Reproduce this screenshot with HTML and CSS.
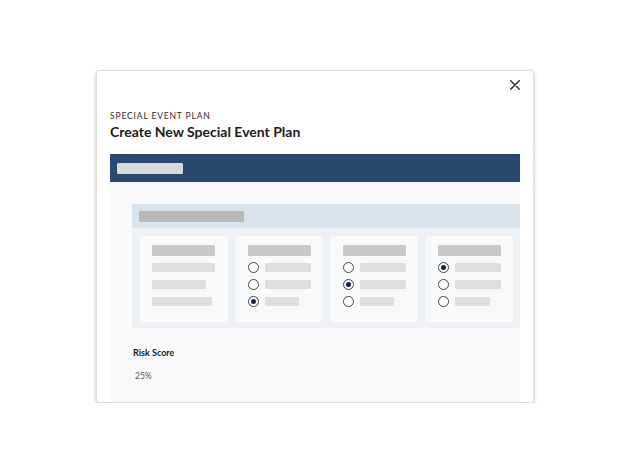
FILE: index.html
```html
<!DOCTYPE html>
<html lang="en">
<head>
<meta charset="utf-8">
<title>Create New Special Event Plan</title>
<link rel="stylesheet" href="styles.css">
</head>
<body>
<div class="modal">
  <div class="modal-top">
    <button class="close" aria-label="Close">
      <svg width="10" height="10" viewBox="0 0 10 10"><path d="M0.7 0.7 L9.3 9.3 M9.3 0.7 L0.7 9.3" stroke="#2b2b2b" stroke-width="1.4" fill="none" stroke-linecap="round"/></svg>
    </button>
  </div>
  <div class="eyebrow">SPECIAL EVENT PLAN</div>
  <h1 class="title">Create New Special Event Plan</h1>
  <div class="topbar"><span class="ph ph-bar"></span></div>
  <div class="content">
    <div class="panel">
      <div class="panel-head"><span class="ph ph-panel"></span></div>
      <div class="panel-body">
        <div class="card card-plain">
          <span class="ph ph-head"></span>
          <div class="row"><span class="ph ph-line" style="width:63px"></span></div>
          <div class="row"><span class="ph ph-line" style="width:54px"></span></div>
          <div class="row"><span class="ph ph-line" style="width:60px"></span></div>
        </div>
        <div class="card">
          <span class="ph ph-head"></span>
          <div class="row"><span class="radio"></span><span class="ph ph-line" style="width:46px"></span></div>
          <div class="row"><span class="radio"></span><span class="ph ph-line" style="width:46px"></span></div>
          <div class="row"><span class="radio checked"></span><span class="ph ph-line" style="width:34px"></span></div>
        </div>
        <div class="card">
          <span class="ph ph-head"></span>
          <div class="row"><span class="radio"></span><span class="ph ph-line" style="width:47px"></span></div>
          <div class="row"><span class="radio checked"></span><span class="ph ph-line" style="width:47px"></span></div>
          <div class="row"><span class="radio"></span><span class="ph ph-line" style="width:34px"></span></div>
        </div>
        <div class="card">
          <span class="ph ph-head"></span>
          <div class="row"><span class="radio checked"></span><span class="ph ph-line" style="width:47px"></span></div>
          <div class="row"><span class="radio"></span><span class="ph ph-line" style="width:47px"></span></div>
          <div class="row"><span class="radio"></span><span class="ph ph-line" style="width:35px"></span></div>
        </div>
      </div>
    </div>
    <div class="risk-label">Risk Score</div>
    <div class="risk-value">25%</div>
  </div>
</div>
</body>
</html>
```
FILE: styles.css
```css
* { box-sizing: border-box; }
html, body { margin: 0; padding: 0; background: #ffffff; }
body {
  font-family: Lato, "Open Sans", "Liberation Sans", sans-serif;
  color: #1f1f1f;
}
.modal {
  margin: 70px 0 0 96px;
  width: 438px;
  height: 333px;
  background: #ffffff;
  border: 1px solid #dcdcdc;
  border-radius: 3px;
  box-shadow: 0 2px 4px rgba(0, 0, 0, 0.22);
  padding: 0 13px;
  overflow: hidden;
}
.modal-top {
  display: flex;
  justify-content: flex-end;
  padding-top: 9px;
  height: 19px;
}
.close {
  width: 10px;
  height: 10px;
  padding: 0;
  border: 0;
  background: none;
  display: block;
}
.close svg { display: block; }
.eyebrow {
  margin-top: 21px;
  font-size: 8.5px;
  line-height: 10px;
  letter-spacing: 0.85px;
  color: #2a2a2a;
}
.title {
  margin: 2px 0 0;
  font-size: 14px;
  line-height: 17px;
  font-weight: 700;
  color: #1a1a1a;
}
.topbar {
  margin-top: 14px;
  height: 28px;
  background: #274a6e;
  display: flex;
  align-items: center;
  padding-left: 7px;
}
.ph {
  display: block;
  border-radius: 1.5px;
}
.ph-bar {
  width: 66px;
  height: 11px;
  background: #d9d9d9;
}
.content {
  background: #f9f9f9;
  height: 220px;
  padding: 22px 0 0 22px;
}
.panel {
  width: 388px;
}
.panel-head {
  height: 24px;
  background: #d9e3ed;
  display: flex;
  align-items: center;
  padding-left: 7px;
}
.ph-panel {
  width: 105px;
  height: 11px;
  background: #b8b8b8;
}
.panel-body {
  background: #edf1f5;
  display: flex;
  gap: 7px;
  padding: 8px 7px 6px 8px;
}
.card {
  width: 88px;
  height: 86px;
  background: #f7f9fb;
  border-radius: 3px;
  box-shadow: 0 0 1px rgba(0, 0, 0, 0.06);
  padding: 9px 12px 0 13px;
  display: flex;
  flex-direction: column;
  gap: 6px;
}
.card-plain { padding-left: 12px; }
.ph-head {
  width: 63px;
  height: 11px;
  background: #c8c8c8;
}
.row {
  height: 11px;
  display: flex;
  align-items: center;
  gap: 6px;
}
.ph-line {
  height: 9px;
  background: #dedede;
}
.radio {
  width: 11px;
  height: 11px;
  flex: none;
  border-radius: 50%;
  border: 1.2px solid #444444;
  background: #ffffff;
  position: relative;
}
.radio.checked::after {
  content: "";
  position: absolute;
  left: 50%;
  top: 50%;
  width: 5.5px;
  height: 5.5px;
  margin: -2.75px 0 0 -2.75px;
  border-radius: 50%;
  background: #152544;
}
.risk-label {
  margin: 19px 0 0 1px;
  font-size: 9px;
  line-height: 11px;
  font-weight: 700;
  color: #1a1a1a;
}
.risk-value {
  margin: 13px 0 0 3px;
  font-size: 8.5px;
  line-height: 10px;
  color: #555555;
}
```
